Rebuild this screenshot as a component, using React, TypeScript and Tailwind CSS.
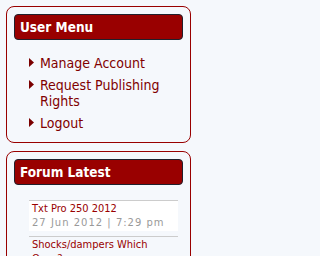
const menuItems = ["Manage Account", "Request Publishing Rights", "Logout"];

const forumItems = [
  { title: "Txt Pro 250 2012", date: "27 Jun 2012 | 7:29 pm", highlight: true },
  { title: "Shocks/dampers Which Ones?", date: "26 Jun 2012 | 9:14 pm", highlight: false },
  { title: "Gas Gas Pro 300 2011", date: "25 Jun 2012 | 6:02 pm", highlight: false },
];

function Arrow() {
  return (
    <svg viewBox="0 0 5 9" className="mt-[3px] h-[9px] w-[5px] shrink-0">
      <polygon points="0,0 5,4.5 0,9" fill="#7a0000" />
    </svg>
  );
}

function BoxHeader({ title }: { title: string }) {
  return (
    <div className="flex h-[26px] items-center rounded-[4px] border border-[#20202c] bg-[#990000] pl-[5px] text-[13.5px] font-bold text-white">
      {title}
    </div>
  );
}

export default function App() {
  return (
    <div className="min-h-screen bg-[#f5f8fc] pl-[6px] pt-[6px] font-['DejaVu_Sans_Condensed','DejaVu_Sans',sans-serif]">
      <div className="w-[185px] rounded-[8px] border border-[#990000] p-[7px] pb-[11px]">
        <BoxHeader title="User Menu" />
        <ul className="ml-[15px] mt-[15px] flex flex-col gap-[5px]">
          {menuItems.map((item) => (
            <li key={item} className="flex gap-[6px]">
              <Arrow />
              <a className="text-[14px] leading-[16.5px] text-[#800000]">{item}</a>
            </li>
          ))}
        </ul>
      </div>

      <div className="mt-[8px] w-[185px] rounded-[8px] border border-[#990000] p-[7px] pb-[11px]">
        <BoxHeader title="Forum Latest" />
        <ul className="ml-[15px] mr-[5px] mt-[15px] flex flex-col gap-[5px]">
          {forumItems.map((item) => (
            <li
              key={item.title}
              className={`border-t border-[#cccccc] px-[3px] py-[1px] ${item.highlight ? "bg-white" : ""}`}
            >
              <div className="text-[11px] leading-[14px] text-[#990000]">{item.title}</div>
              <div className="font-['DejaVu_Sans',sans-serif] text-[10px] leading-[14px] tracking-[1px] text-[#999999]">
                {item.date}
              </div>
            </li>
          ))}
        </ul>
      </div>
    </div>
  );
}
